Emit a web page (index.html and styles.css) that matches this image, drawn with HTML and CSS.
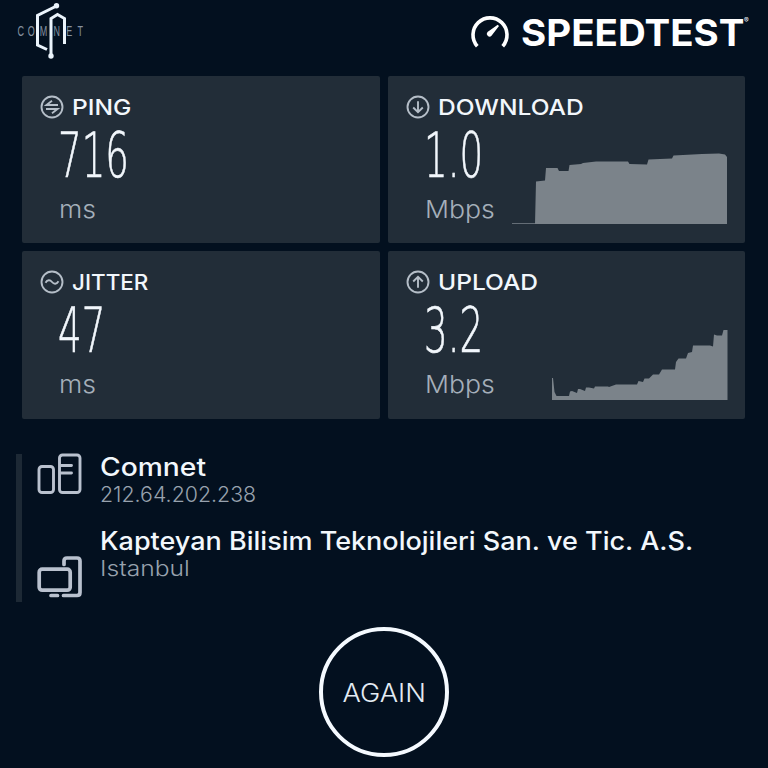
FILE: index.html
```html
<!DOCTYPE html>
<html lang="en">
<head>
    <meta charset="UTF-8">
    <meta name="viewport" content="width=device-width, initial-scale=1.0">
    <title>Speedtest</title>
    <link rel="stylesheet" href="styles.css">
</head>
<body>
    <header class="header">
        <svg class="comnet" width="76" height="60" viewBox="0 0 76 60">
            <text class="comnet-text" x="6 23 43 66 87 106" y="36">COMNET</text>
            <g fill="none" stroke="#eaf3fb" stroke-width="3">
                <path d="M42.500 6 23.500 15.500V45L33 49.500"/>
                <path d="M37 55V18.500L43.500 14.500L50.500 18.500V44"/>
            </g>
            <circle cx="42.500" cy="5.800" r="2.700" fill="#eaf3fb"/>
            <circle cx="37" cy="56" r="2.700" fill="#eaf3fb"/>
        </svg>
        <div class="brand">
            <svg width="40" height="36" viewBox="0 0 40 36">
                <path d="M7.300 32.200A17 17 0 1 1 32.700 32.200" fill="none" stroke="#fff" stroke-width="3.600"/>
                <path d="M27.700 10.700 29 12 21.500 21.800A2.800 2.800 0 0 1 17.500 17.900Z" fill="#fff"/>
            </svg>
            <span class="brand-name">SPEEDTEST</span>
            <span class="brand-mark">®</span>
        </div>
    </header>

    <main class="results">
        <section class="card">
            <h2 class="card-title">
                <svg class="icon" viewBox="0 0 24 24">
                    <circle cx="12" cy="12" r="10.500"/>
                    <path d="M18 10H6.500L12 5.800M6 14H17.500L12 18.200"/>
                </svg>
                <span class="label">PING</span>
            </h2>
            <div class="value">716</div>
            <div class="unit">ms</div>
        </section>
        <section class="card">
            <h2 class="card-title">
                <svg class="icon" viewBox="0 0 24 24">
                    <circle cx="12" cy="12" r="10.500"/>
                    <path d="M12 6.300V17M7.200 12.500 12 17.200 16.800 12.500"/>
                </svg>
                <span class="label">DOWNLOAD</span>
            </h2>
            <div class="value">1.0</div>
            <div class="unit">Mbps</div>
            <svg class="chart" width="216" height="74" viewBox="0 0 216 74">
                <path d="M0 73.300H24V74H0ZM23 74 24 31.500 33 30.500 34 18H45.500L47 21H56.500L57.500 15 69 14 71 13 84 11.500 110 11.500H116L117.500 14 135 14.500 136.500 9.500 160 8.500 161.500 5.500 190 4 207 3.500 213 4.500 215 7V74Z"/>
            </svg>
        </section>
        <section class="card">
            <h2 class="card-title">
                <svg class="icon" viewBox="0 0 24 24">
                    <circle cx="12" cy="12" r="10.500"/>
                    <path d="M5.500 12.800C7.500 9.500 10 9.500 12 12S16.500 14.500 18.500 11.200"/>
                </svg>
                <span class="label label-jitter">JITTER</span>
            </h2>
            <div class="value">47</div>
            <div class="unit">ms</div>
        </section>
        <section class="card">
            <h2 class="card-title">
                <svg class="icon" viewBox="0 0 24 24">
                    <circle cx="12" cy="12" r="10.500"/>
                    <path d="M12 17.700V7M7.200 11.500 12 6.800 16.800 11.500"/>
                </svg>
                <span class="label">UPLOAD</span>
            </h2>
            <div class="value">3.2</div>
            <div class="unit">Mbps</div>
            <svg class="chart" width="216" height="74" viewBox="0 0 216 74">
                <path d="M40 74V52H41L42.500 66 44.500 70H57L58 65.500 60 65 65 67 66 63H68L73 65 74 61.500H77L82 62.500 83 60.500H96L97 61 104 58.500H125L126.500 55 131 56 132.500 52.500H137L141 48.500H147L150 43.500H163L164 36 166.500 32.500H174L176 27 180 26 181 19.500H198L201 20.500 202 8.500 205 9.500H210L211.500 4H215.500V74Z"/>
            </svg>
        </section>
    </main>

    <div class="info">
        <div class="info-row">
            <svg class="info-icon" viewBox="0 0 46 42">
                <rect x="2" y="13.500" width="14.500" height="26" rx="3"/>
                <rect x="22.500" y="2" width="20.500" height="37.500" rx="3"/>
                <path d="M24 12.500H34.500M24 20H34.500"/>
            </svg>
            <div>
                <div class="info-name name-host">Comnet</div>
                <div class="info-sub sub-ip">212.64.202.238</div>
            </div>
        </div>
        <div class="info-row info-row-last">
            <svg class="info-icon info-icon-bold" viewBox="0 0 46 42">
                <rect x="2.200" y="13.200" width="31" height="21" rx="3"/>
                <path d="M27 8.500V5Q27 2 30 2H40Q43 2 43 5V36.500Q43 39.500 40 39.500H26.500M14 39.500H20.500"/>
            </svg>
            <div>
                <div class="info-name">Kapteyan Bilisim Teknolojileri San. ve Tic. A.S.</div>
                <div class="info-sub">Istanbul</div>
            </div>
        </div>
    </div>

    <button class="again" type="button"><span class="again-text">AGAIN</span></button>
</body>
</html>
```

FILE: styles.css
```css
* {
    box-sizing: border-box;
}
body {
    margin: 0;
    height: 768px;
    overflow: hidden;
    background-color: #03101f;
    color: #f2f7fc;
    font-family: Inter, "Liberation Sans", sans-serif;
}
.header {
    display: flex;
    justify-content: space-between;
    height: 76px;
    padding: 0 18px 0 14px;
}
.comnet-text {
    font-family: "Liberation Sans", sans-serif;
    font-size: 15px;
    fill: #8592a0;
    transform: scaleX(0.600);
}
.brand {
    display: flex;
    align-items: flex-start;
    padding-top: 14px;
}
.brand-name {
    margin: -4px 0 0 11px;
    width: 219px;
    font-size: 37px;
    line-height: 45px;
    font-weight: 700;
    color: #fff;
    transform: scaleX(1.040);
    transform-origin: left;
}
.brand-mark {
    margin: 3px 0 0 4px;
    width: 6px;
    font-size: 7px;
    line-height: 8px;
}
.results {
    display: grid;
    grid-template-columns: 358px 357px;
    grid-template-rows: 167px 168px;
    gap: 8px;
    padding-left: 22px;
}
.card {
    position: relative;
    padding: 18px;
    border-radius: 2px;
    background-color: #222d38;
}
.card-title {
    display: flex;
    align-items: center;
    gap: 8px;
    height: 25px;
    margin: 0;
    font-size: 22px;
    font-weight: 500;
}
.label {
    transform: scaleX(1.115);
    transform-origin: left;
}
.label-jitter {
    transform: scaleX(1.020);
}
.icon {
    width: 24px;
    height: 24px;
    fill: none;
    stroke: #b5bec8;
    stroke-width: 1.900;
}
.value {
    height: 72px;
    margin-left: 18px;
    font-family: "DejaVu Sans", sans-serif;
    font-size: 62px;
    font-weight: 200;
    line-height: 73px;
    transform: scaleX(0.600);
    transform-origin: left;
    -webkit-text-stroke: 0.700px #f2f7fc;
}
.unit {
    margin-left: 19px;
    font-size: 24px;
    font-weight: 300;
    line-height: 38px;
    color: #a5afba;
    transform: scaleX(1.110);
    transform-origin: left;
    width: 80px;
}
.chart {
    position: absolute;
    right: 17px;
    bottom: 19px;
    fill: #7b838a;
}
.info {
    margin: 35px 0 0 16px;
    height: 148px;
    border-left: 6px solid #1d2935;
    padding-left: 15px;
}
.info-row {
    display: flex;
    gap: 17px;
    height: 74px;
}
.info-row-last .info-icon {
    margin-top: 28px;
}
.info-icon {
    width: 46px;
    height: 42px;
    margin-top: -1px;
    fill: none;
    stroke: #b9c1ce;
    stroke-width: 2.900;
    stroke-linecap: round;
}
.info-icon-bold {
    stroke-width: 3.700;
}
.info-name {
    font-size: 25px;
    font-weight: 500;
    line-height: 26px;
    white-space: nowrap;
    transform: scaleX(1.080);
    transform-origin: left;
}
.name-host {
    transform: scaleX(1.130);
}
.info-sub {
    font-size: 22px;
    font-weight: 300;
    line-height: 28px;
    color: #98a2ae;
    transform: scaleX(1.120);
    transform-origin: left;
}
.sub-ip {
    transform: scaleX(0.970);
}
.again {
    display: block;
    width: 130px;
    height: 130px;
    margin: 25px auto 0;
    padding: 2px 0 0;
    border: 4px solid #f5faff;
    border-radius: 50%;
    background: none;
    color: #e3ebf3;
    font-family: inherit;
    font-size: 25px;
    font-weight: 300;
}
.again-text {
    display: inline-block;
    transform: scaleX(1.090);
}
```
